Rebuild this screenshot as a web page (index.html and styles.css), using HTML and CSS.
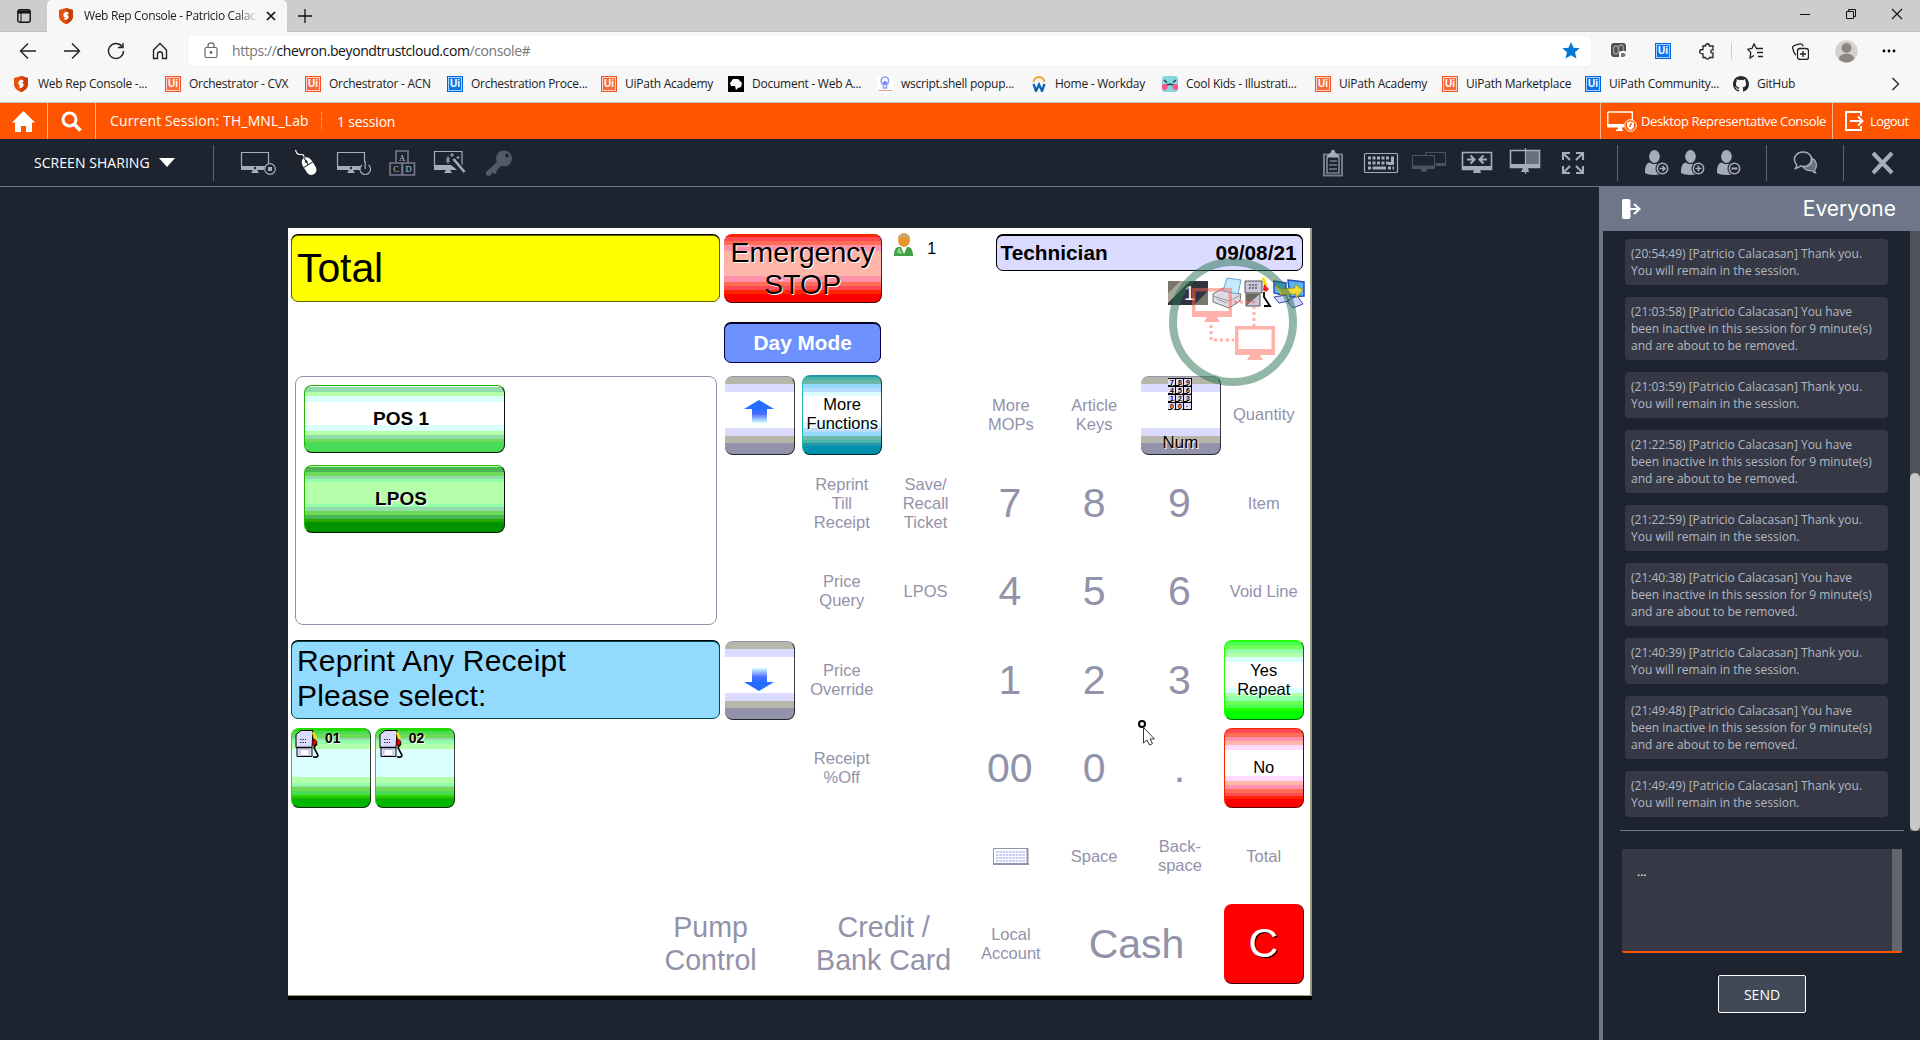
FILE: index.html
```html
<!DOCTYPE html>
<html lang="en">
<head>
<meta charset="utf-8">
<title>Web Rep Console - Patricio Calacasan</title>
<link rel="stylesheet" href="styles.css">
</head>
<body>
<svg class="defs" width="0" height="0" aria-hidden="true">
  <defs>
    <symbol id="shield" viewBox="0 0 14 16"><path d="M7 0l7 2v6c0 4-3 6.500-7 8-4-1.500-7-4-7-8V2z" fill="#e8500c"/><path d="M7 0l7 2v6c0 4-3 6.500-7 8z" fill="#c93f06"/><path d="M5 9c-1.500-3 0-5 3-5.500l2 2-2 1 1 1c2 2-1 5-3 4.500l-1-2 2-.5z" fill="#fff"/></symbol>
    <symbol id="pump" viewBox="0 0 25 28"><path d="M1 5l5-4h12l-1 17v9H2V18H1z" fill="#dbdbff" stroke="#000"/><path d="M1 18h16" stroke="#000" stroke-width="1.500"/><path d="M5 20h9v6H5z" fill="#fff" stroke="#b6b6db"/><path d="M5 10h6M5 13h6" stroke="#333" stroke-dasharray="1.500 1"/><path d="M18 3l3 6" stroke="#ffdb00" stroke-width="2.500"/><path d="M18 9l4 3-1 4h-3z" fill="#f00" stroke="#600"/><path d="M22 14l-3 4 4 8c0 2-4 2-5 1" fill="none" stroke="#000" stroke-width="1.600"/></symbol>
    <symbol id="person" viewBox="0 0 24 26"><ellipse cx="9.500" cy="6.500" rx="5.300" ry="6.500"/><path d="M0 23c0-8 2-10 5-10.500 2 2 7 2 9 0 2 .5 3 1.200 4 2.500v9c-5 1.300-15 1.300-18-1z"/><circle cx="17.500" cy="18.500" r="7" fill="#1e2330"/><circle cx="17.500" cy="18.500" r="5.200" fill="none" stroke="#a6acba" stroke-width="1.500"/></symbol>
  </defs>
</svg>

<header class="browser">
  <div class="tabstrip">
    <svg class="tabmenu" width="14" height="14" viewBox="0 0 14 14"><rect x=".8" y=".8" width="12.400" height="12.400" rx="2" fill="none" stroke="#111" stroke-width="1.400"/><path d="M1 3h12" stroke="#111" stroke-width="3"/><path d="M4 3v10" stroke="#111"/></svg>
    <div class="tab"><svg width="14" height="16"><use href="#shield"/></svg><span class="tabtitle">Web Rep Console - Patricio Calac</span><svg width="10" height="10" viewBox="0 0 10 10"><path d="M1 1l8 8M9 1l-8 8" stroke="#111" stroke-width="1.700"/></svg></div>
    <svg class="newtab" width="14" height="14" viewBox="0 0 14 14"><path d="M7 0v14M0 7h14" stroke="#111" stroke-width="1.300"/></svg>
    <div class="winctl">
      <svg width="12" height="12" viewBox="0 0 12 12"><path d="M1 6.500h10" stroke="#111"/></svg>
      <svg width="12" height="12" viewBox="0 0 12 12" fill="none" stroke="#111"><path d="M1.500 3.500h7v7h-7zM3.500 3V1.500h7v7H9"/></svg>
      <svg width="12" height="12" viewBox="0 0 12 12"><path d="M1 1l10 10M11 1L1 11" stroke="#111" stroke-width="1.100"/></svg>
    </div>
  </div>
  <div class="navbar">
    <div class="navbtns">
      <svg width="18" height="18" viewBox="0 0 18 18"><path d="M17 9H1.500M9 1.500L1.500 9 9 16.500"/></svg>
      <svg width="18" height="18" viewBox="0 0 18 18"><path d="M1 9h15.500M9 1.500L16.500 9 9 16.500"/></svg>
      <svg width="18" height="18" viewBox="0 0 18 18"><path d="M15 4.500A7.500 7.500 0 1 0 16.500 9M16 1v4.500h-5"/></svg>
      <svg width="18" height="18" viewBox="0 0 18 18"><path d="M2.500 8L9 1.500 15.500 8v8.500h-4V12c0-3-5-3-5 0v4.500h-4z"/></svg>
    </div>
    <div class="address">
      <svg width="14" height="17" viewBox="0 0 14 17" fill="none" stroke="#666" stroke-width="1.200"><rect x="1" y="5.500" width="12" height="10" rx="1.500"/><path d="M4 5.500V3.500c0-3.500 6-3.500 6 0v2"/><circle cx="7" cy="10.500" r=".8" fill="#666"/></svg>
      <span class="url">https://<b>chevron.beyondtrustcloud.com</b>/console#</span>
      <svg class="star" width="18" height="17" viewBox="0 0 18 17"><path d="M9 0l2.500 5.700 6.200.6-4.700 4 1.500 6.200L9 13.300 3.500 16.500 5 10.300l-4.700-4 6.200-.6z" fill="#0078d4"/></svg>
    </div>
    <div class="exts">
      <svg width="16" height="16" viewBox="0 0 16 16"><rect width="15" height="14" rx="3" fill="#505050"/><ellipse cx="5" cy="7" rx="2.500" ry="4" fill="none" stroke="#999" stroke-width="1.400"/><ellipse cx="10" cy="6" rx="2.500" ry="4" fill="none" stroke="#999" stroke-width="1.400"/><rect x="8" y="8" width="8" height="8" rx="3" fill="#fff"/><path d="M10 10h3l2 2-2 2h-3z" fill="#777"/></svg>
      <span class="ui blue">Ui</span>
      <svg width="16" height="17" viewBox="0 0 16 17" class="line"><path d="M4 3h2.500c0-3 4-3 4 0H14v4c-3-.5-3 3.500 0 3v4.500h-3.500c0 2-4 2-4 0H4v-3.500c-4.500 0-4.500-4.500 0-4.500z"/></svg>
      <i class="vsep"></i>
      <svg width="17" height="16" viewBox="0 0 17 16" class="line"><path d="M11 5.500H9.500L7 1 5 5.500l-4.200.7 3 3.500L3 15l4-2.500M9.500 5.500H16M10 9.500h6M11 13.500h5"/></svg>
      <svg width="17" height="17" viewBox="0 0 17 17" class="line"><rect x="5.500" y="5.500" width="11" height="11" rx="2.500"/><path d="M11 8v6M8 11h6M4 12C2 11.500.6 5 .6 4 .6 2.500 7 .6 9 .8c1.500.2 2 1.200 2.200 2.500"/></svg>
      <svg width="23" height="23" viewBox="0 0 23 23"><circle cx="11.500" cy="11.500" r="11.200" fill="#d4d1ce"/><circle cx="11.500" cy="8" r="5" fill="#8b8784"/><path d="M4 19c0-7 15-7 15 0-3.500 4.500-11.500 4.500-15 0z" fill="#8b8784"/></svg>
      <svg width="14" height="4" viewBox="0 0 14 4"><circle cx="2" cy="2" r="1.400"/><circle cx="7" cy="2" r="1.400"/><circle cx="12" cy="2" r="1.400"/></svg>
    </div>
  </div>
  <nav class="bookmarks">
    <a><svg width="16" height="16"><use href="#shield"/></svg>Web Rep Console -...</a>
    <a><span class="ui">Ui</span>Orchestrator - CVX</a>
    <a><span class="ui">Ui</span>Orchestrator - ACN</a>
    <a><span class="ui blue">Ui</span>Orchestration Proce...</a>
    <a><span class="ui">Ui</span>UiPath Academy</a>
    <a><svg width="16" height="16" viewBox="0 0 16 16"><path d="M0 0h16v16H0z"/><path d="M2 7l3-4 5 0 4 4-1 4-3 1-2 2-1-4-4 0z" fill="#fff"/></svg>Document - Web A...</a>
    <a><svg width="16" height="16" viewBox="0 0 16 16"><path d="M0 0h16v16H0z" fill="#fff"/><path d="M6.500 9C2.500 6 4 1 8 1s5 5 1.500 8v3h-3z" fill="none" stroke="#8aa0ff" stroke-width="1.500"/><circle cx="8" cy="7" r="2" fill="#7086ee"/><path d="M1 14.500h14" stroke="#f49a9a"/></svg>wscript.shell popup...</a>
    <a><svg width="16" height="16" viewBox="0 0 16 16"><path d="M2.500 6c1-6.500 10-6.500 11 0" fill="none" stroke="#f59b20" stroke-width="1.800"/><path d="M2.500 8l2.500 7 3-6.500 3 6.500 2.500-7" fill="none" stroke="#0c62b8" stroke-width="2.300"/></svg>Home - Workday</a>
    <a><svg width="16" height="16" viewBox="0 0 16 16"><rect width="16" height="16" rx="3" fill="#84d7df"/><circle cx="2.500" cy="11" r="3" fill="#ff5588"/><circle cx="13.500" cy="11" r="3" fill="#ff5588"/><path d="M2 4l3 2.500M14 4l-3 2.500M5 8c1 2 2 0 3 0s2 2 3 0" fill="none" stroke="#333" stroke-width="1.400"/></svg>Cool Kids - Illustrati...</a>
    <a><span class="ui">Ui</span>UiPath Academy</a>
    <a><span class="ui">Ui</span>UiPath Marketplace</a>
    <a><span class="ui blue">Ui</span>UiPath Community...</a>
    <a><svg width="16" height="16" viewBox="0 0 16 16"><path fill="#24292f" d="M8 0C3.580 0 0 3.580 0 8c0 3.540 2.290 6.530 5.470 7.590.4.070.55-.17.55-.38v-1.490c-2.010.37-2.530-.49-2.690-.94-.09-.23-.48-.94-.82-1.130-.28-.15-.68-.52-.01-.53.630-.01 1.080.58 1.230.82.720 1.210 1.870.87 2.330.66.070-.52.280-.87.510-1.070-1.780-.2-3.640-.89-3.640-3.950 0-.87.310-1.590.820-2.150-.08-.2-.36-1.020.08-2.120 0 0 .67-.21 2.200.82a7.400 7.400 0 0 1 4 0c1.530-1.040 2.200-.82 2.200-.82.440 1.100.160 1.920.080 2.120.510.560.820 1.270.820 2.150 0 3.070-1.870 3.750-3.650 3.950.290.250.540.730.540 1.480v2.200c0 .21.150.46.550.38A8 8 0 0 0 16 8c0-4.420-3.580-8-8-8z"/></svg>GitHub</a>
    <svg class="more" width="9" height="14" viewBox="0 0 9 14"><path d="M1.500 1L7.500 7l-6 6" fill="none" stroke="#222" stroke-width="1.300"/></svg>
  </nav>
</header>

<div class="sessionbar">
  <div class="sq"><svg width="23" height="21" viewBox="0 0 23 21"><path d="M11.500 0L23 11.500h-3V21h-6v-6H9v6H3v-9.500H0z" fill="#fff"/></svg></div>
  <div class="sq"><svg width="21" height="21" viewBox="0 0 21 21"><circle cx="8.500" cy="8.500" r="6.500" fill="none" stroke="#fff" stroke-width="3"/><path d="M13 13l6.500 6.500" stroke="#fff" stroke-width="3.500"/></svg></div>
  <span class="cur">Current Session: TH_MNL_Lab</span>
  <span class="count">1 session</span>
  <div class="drc"><svg width="30" height="23" viewBox="0 0 30 23"><path d="M.8 2h24.500v10" fill="none" stroke="#fff" stroke-width="1.300"/><path d="M.8 2v14" stroke="#fff" stroke-width="1.300"/><path d="M.2 14h17l-.5 3.500H.2zM9 19.500h7V21H9zM11 17.500h4v2h-4z" fill="#fff"/><circle cx="23.500" cy="15.500" r="5.800" fill="#ff5500" stroke="#fff"/><path d="M20 12.500l3.500-1 3.500 1v3c0 2-1.500 4-3.500 4.500-2-.5-3.500-2.500-3.500-4.500z" fill="#fff"/><path d="M22.500 17l2-4" stroke="#ff5500" stroke-width="1.500"/></svg><span>Desktop Representative Console</span></div>
  <div class="logout"><svg width="20" height="20" viewBox="0 0 20 20" fill="none" stroke="#fff" stroke-width="1.900"><path d="M16 5V1H1v18h15v-4M5 10h13M13 5.500l4.500 4.500-4.500 4.500"/></svg><span>Logout</span></div>
</div>

<div class="tools">
  <div class="mode">SCREEN SHARING<i></i></div>
  <div class="icons">
    <svg viewBox="0 0 48 37"><path d="M7.500 22V8.500h27V20" class="ln"/><path d="M7 22h24l-1 4H7zM19 26h4l2 3h-8z"/><circle cx="21" cy="24" r="1.200" fill="#1e2330"/><circle cx="36" cy="25" r="5.300" class="ln"/><path d="M34 23h4v4h-4z"/></svg>
    <svg viewBox="0 0 48 37"><g transform="translate(0 1) rotate(-32 27 21)" fill="#fff"><path d="M21.800 18.500c0-4.500 2.200-7 5.200-7s5.200 2.500 5.200 7v6c0 4-2.200 6-5.200 6s-5.200-2-5.200-6z"/><path d="M21.500 19.500h11M27 12v7.500" stroke="#1e2330"/><path d="M27 14.500v2.500" stroke="#1e2330" stroke-width="2.200"/></g><path d="M22 13.500c0-3.500-1.500-3-4.500-3s-3-2-4-4.500" class="ln white"/></svg>
    <svg viewBox="0 0 48 37"><path d="M7.500 22V8.500h27V18" class="ln"/><path d="M7 22h23v4H7zM19 26h4l2 3h-8z"/><circle cx="21" cy="24" r="1.200" fill="#1e2330"/><path d="M32 21a5.300 5.300 0 1 0 6.500 0M35.200 17v8" class="ln"/></svg>
    <svg viewBox="0 0 48 37" class="mid"><path d="M18 7h12v12H18zM12 19h12v12H12zM24.500 19h12v12h-12z" class="ln2"/><text x="24" y="16.500">A</text><text x="18" y="28">C</text><text x="30.500" y="28">D</text></svg>
    <svg viewBox="0 0 48 37"><path d="M8.500 22V7.500h27.500V24" class="ln"/><path d="M8 21h17l6 5H8zM20 26h4l2 3h-8z"/><path d="M27 14l12 14" stroke="#1e2330" stroke-width="5"/><path d="M27.500 15L38.500 28" stroke="#a6acba" stroke-width="2.600"/><path d="M20 14l4 4M24 14l-4 4M22 12v8M26 9v4M24 11h4M32 12v3M30.500 13.500h3" stroke="#a6acba"/></svg>
    <svg viewBox="0 0 48 37"><g fill="#545966"><circle cx="30" cy="14.500" r="8"/><path d="M24 17l4 4-5 5-1 4-4-1-2 3-4-1v-3z"/></g><circle cx="33" cy="11.500" r="2" fill="#1e2330"/></svg>
  </div>
  <div class="icons right">
    <svg viewBox="0 0 48 37"><path d="M15 10.500h18v21H15z" fill="none" stroke="#757b8a" stroke-width="2"/><path d="M18 13h12v16H18z" class="ln"/><path d="M18 13c0-3 3-3 4-5 0-3 4-3 4 0 1 2 4 2 4 5z"/><path d="M21 17h7M20 21h8M20 25h8" class="ln"/></svg>
    <svg viewBox="0 0 48 37"><rect x="7.500" y="9.500" width="33" height="19" rx="1" class="ln"/><path d="M11 14h22M11 19h22M11 24h5M31 24h6" stroke="#a6acba" stroke-width="3" stroke-dasharray="3 1.500"/><path d="M16 24h13M35.500 12.500v8M31 19.500h6" stroke="#a6acba" stroke-width="3"/></svg>
    <svg viewBox="0 0 48 37" fill="#4d5260" stroke="#4d5260"><path d="M20.500 11V8.500h20v13H31" fill="none"/><path d="M31 19.500h9v2h-9z"/><path d="M7.500 11.500h22v13h-22z" fill="none"/><path d="M8 22h21v2H8zM17 25h4l1 2h-6z"/></svg>
    <svg viewBox="0 0 48 37"><path d="M9.500 8.500h29v17h-29z" class="ln heavy"/><path d="M9 22h30v4H9zM21 26h6l1 3h-8z"/><path d="M14 15.500h7M17.500 11.500l4 4-4 4M34 15.500h-7M30.500 11.500l-4 4 4 4" class="ln bold"/></svg>
    <svg viewBox="0 0 48 37"><path d="M24 7h14.500v14H24z" fill="#6b7080"/><path d="M9.500 6.500h29v17h-29z" class="ln heavy"/><path d="M9 20h30v4H9zM22 24h5l1 4h-8z"/><path d="M24.500 4v26" class="ln"/></svg>
    <svg viewBox="0 0 48 37"><path d="M14 16V9h7M14 9l7 7M27 9h7v7M34 9l-7 7M14 22v7h7M14 29l7-7M34 22v7h-7M34 29l-7-7" class="ln bold"/></svg>
  </div>
  <div class="people">
    <svg viewBox="0 0 24 26"><use href="#person"/><path d="M14.500 18.500h5M17.500 16l2.500 2.500-2.500 2.500" class="ln heavy"/></svg>
    <svg viewBox="0 0 24 26"><use href="#person"/><path d="M14.500 18.500h6M17.500 15.500v6" class="ln heavy"/></svg>
    <svg viewBox="0 0 24 26"><use href="#person"/><path d="M14.500 18.500h6" class="ln bold"/></svg>
  </div>
  <div class="chat"><svg width="24" height="23" viewBox="0 0 24 23"><path d="M10 16c2 3 6 4 9 3.500 1 1.500 2 2 3.500 2.500-1-1.500-.5-2.500-.5-4 3-3 1-9-3-11 1 5-2 9-9 9z" fill="#6b7080" stroke="#a6acba" stroke-width="1.200"/><path d="M3.500 13.500c-5-6 0-12.500 6.500-12.500s9.500 5 8 9.500c-1.500 4-6 5.500-10.500 4.500-1 1-3 2-5 2.500 1-1.500 1.500-2.500 1-4z" fill="#1e2330" stroke="#a6acba" stroke-width="1.500"/></svg></div>
  <div class="close"><svg width="23" height="24" viewBox="0 0 23 24"><path d="M2 2l19 20M21 2L2 22" stroke="#a6acba" stroke-width="4"/></svg></div>
</div>

<main class="work">
  <section class="stage">
    <div class="pos">
      <div class="field total">Total</div>
      <div class="btn stop">Emergency<br>STOP</div>
      <div class="user"><svg width="19" height="24" viewBox="0 0 19 24"><ellipse cx="10" cy="7" rx="6" ry="7" fill="#e8962e"/><path d="M4 5c0-6 12-6 12 0-4-1-8-1-12 0z" fill="#c9a878"/><path d="M0 23c0-7 2-9 5-9h9c3 0 5 3 5 9z" fill="#3fa045"/><path d="M3 20c0-3 1-5 3-5l2 6z" fill="#7fd67a"/><path d="M7 14l3 7 3-7z" fill="#fff"/></svg>1</div>
      <div class="field tech"><span>Technician</span><span>09/08/21</span></div>
      <div class="field day">Day Mode</div>
      <div class="panel"><div class="btn pos1">POS 1</div><div class="btn lpos">LPOS</div></div>
      <div class="btn gray up"><svg width="30" height="24" viewBox="0 0 30 24"><defs><linearGradient id="ga" x1="0" y1="0" x2="0" y2="1"><stop stop-color="#2470ff"/><stop offset=".35" stop-color="#496dff"/><stop offset="1" stop-color="#dbffff"/></linearGradient></defs><path d="M8 9h15v14H8z" fill="url(#ga)"/><path d="M15 0l15 9H0z" fill="#246dff"/></svg></div>
      <div class="btn teal more-fn">More<br>Functions</div>
      <div class="key k9 r1">More<br>MOPs</div><div class="key k10 r1">Article<br>Keys</div>
      <div class="btn gray num"><svg width="24" height="32" viewBox="0 0 24 32"><path d="M0 0h24v32H0z" fill="#000"/><path d="M0 1h7v6H0zM8 1h7v6H8zM16 1h7v6h-7zM0 9h7v6H0zM8 9h7v6H8zM16 9h7v6h-7zM0 17h7v6H0zM8 17h7v6H8zM16 17h7v6h-7zM0 25h7v6H0zM8 25h7v6H8zM16 25h7v6h-7z" fill="#dbdbff"/><g font-family="Liberation Sans" font-size="7" font-weight="bold"><text x="2" y="6.500">7</text><text x="10" y="6.500">8</text><text x="18" y="6.500">9</text><text x="2" y="14.500">4</text><text x="10" y="14.500">5</text><text x="18" y="14.500">6</text><text x="2" y="22.500">1</text><text x="10" y="22.500">2</text><text x="18" y="22.500">3</text><text x="2" y="30.500">0</text><text x="10" y="30.500">0</text><text x="18" y="29">.</text></g></svg><span>Num</span></div>
      <div class="key k12 r1">Quantity</div>
      <div class="key k7 r2">Reprint<br>Till<br>Receipt</div><div class="key k8 r2">Save/<br>Recall<br>Ticket</div><div class="key big k9 r2">7</div><div class="key big k10 r2">8</div><div class="key big k11 r2">9</div><div class="key k12 r2">Item</div>
      <div class="key k7 r3">Price<br>Query</div><div class="key k8 r3">LPOS</div><div class="key big k9 r3">4</div><div class="key big k10 r3">5</div><div class="key big k11 r3">6</div><div class="key k12 r3">Void Line</div>
      <div class="field reprint">Reprint Any Receipt<br>Please select:</div>
      <div class="btn gray down"><svg width="30" height="24" viewBox="0 0 30 24"><g transform="matrix(1 0 0 -1 0 24)"><path d="M8 9h15v14H8z" fill="url(#ga)"/><path d="M15 0l15 9H0z" fill="#246dff"/></g></svg></div>
      <div class="key k7 r4">Price<br>Override</div><div class="key big k9 r4">1</div><div class="key big k10 r4">2</div><div class="key big k11 r4">3</div><div class="btn yes">Yes<br>Repeat</div>
      <div class="btn pump p1"><svg width="25" height="29"><use href="#pump"/></svg>01</div><div class="btn pump p2"><svg width="25" height="29"><use href="#pump"/></svg>02</div>
      <div class="key k7 r5">Receipt<br>%Off</div><div class="key big k9 r5">00</div><div class="key big k10 r5">0</div><div class="key big k11 r5">.</div><div class="btn no">No</div>
      <div class="key k9 r6"><svg width="36" height="17" viewBox="0 0 36 17"><path d="M.5.500h34v15H.5z" fill="#fff" stroke="#9292aa"/><path d="M34.500 0v17M0 16h36" stroke="#9292aa" stroke-width="2"/><path d="M3 4h29M3 7h29M3 10h29M3 13h29" stroke="#c8c8f5" stroke-width="2" stroke-dasharray="2.500 .8"/></svg></div><div class="key k10 r6">Space</div><div class="key k11 r6">Back-<br>space</div><div class="key k12 r6">Total</div>
      <div class="key mid-text pumpctl r7">Pump<br>Control</div><div class="key mid-text credit r7">Credit /<br>Bank Card</div><div class="key k9 r7">Local<br>Account</div><div class="key big cash r7">Cash</div><div class="btn clear">C</div>

      <svg class="status" width="140" height="32" viewBox="0 0 140 32">
        <path d="M1 4h40v24H1z" fill="#333340"/><path d="M1 4h12L1 16zM41 14v14H27z" fill="#79786a"/><path d="M13 4h10L1 26V16z" fill="#a7a698"/><text x="17" y="23" font-family="Liberation Sans" font-size="20" fill="#fff">1</text>
        <path d="M46 17l10-6 18 6-1 7-11 7-16-6z" fill="#dcdbe6" stroke="#777"/><path d="M56 14l4-13 14 2-3 14z" fill="#c3eaff" stroke="#6fa4cf"/><path d="M46 19l16 5 12-6M50 22l10 4" fill="none" stroke="#999"/>
        <path d="M78 4h17v12H78zM79 17h14v12H79z" fill="#c8c8dc" stroke="#555"/><path d="M79 29l14-12H79z" fill="#6b6b62"/><path d="M82 8h8M82 11h8" stroke="#222" stroke-dasharray="2 1"/><path d="M96 1l3 8" stroke="#ffdb00" stroke-width="3"/><path d="M97 7l5 5-3 3-3-2z" fill="#e22"/><path d="M97 15v5l6 9h-6" fill="none" stroke="#000" stroke-width="1.800"/>
        <path d="M107 4l12 2v13l-12-3zM121 3l16 2v14l-14 1z" fill="#58b4f5" stroke="#2850b5" stroke-width="1.500"/><path d="M107 20l12-2 3 6-10 2zM120 24l10-5 6 8-10 4z" fill="#cfd6ff" stroke="#4146a0"/><path d="M108 8l7 4 13-1v-4l8 6-7 8v-4l-15 1z" fill="#eed83a" stroke="#9b8a12" stroke-width=".7"/>
      </svg>
      <svg class="badge" width="128" height="128" viewBox="0 0 128 128"><circle cx="64" cy="64" r="60" fill="none" stroke="#25704f" stroke-opacity=".5" stroke-width="8"/><g fill="#ff6655" fill-opacity=".5" fill-rule="evenodd"><path d="M23 30h40v29H23zM26.500 33.500v19.500h33v-19.500zM38 59h10l3 5H35z"/><path d="M66 68h40v29H66zM69.500 71.500v19.500h33v-19.500zM81 97h10l3 5H78z"/></g><path d="M42 67v15h23M65 44h20v24" fill="none" stroke="#ff6655" stroke-opacity=".5" stroke-width="3" stroke-dasharray="3 3"/></svg>
      <svg class="cursor" width="20" height="27" viewBox="0 0 20 27"><circle cx="4" cy="4" r="3" fill="#fff" stroke="#000" stroke-width="2"/><path d="M5.500 7.500v15.500l3.500-3 2.500 5 3-1.500-2.500-4.500h4.500z" fill="#fff" stroke="#333"/></svg>
    </div>
  </section>

  <aside class="side">
    <div class="sidehead"><svg width="19" height="20" viewBox="0 0 19 20"><rect width="8.500" height="20" rx="2" fill="#fff"/><path d="M8 10h9M12 5l5.500 5-5.500 5" fill="none" stroke="#fff" stroke-width="2"/></svg><span>Everyone</span></div>
    <div class="chatarea">
      <div class="msgs">
        <p>(20:54:49) [Patricio Calacasan] Thank you.<br>You will remain in the session.</p>
        <p>(21:03:58) [Patricio Calacasan] You have<br>been inactive in this session for 9 minute(s)<br>and are about to be removed.</p>
        <p>(21:03:59) [Patricio Calacasan] Thank you.<br>You will remain in the session.</p>
        <p>(21:22:58) [Patricio Calacasan] You have<br>been inactive in this session for 9 minute(s)<br>and are about to be removed.</p>
        <p>(21:22:59) [Patricio Calacasan] Thank you.<br>You will remain in the session.</p>
        <p>(21:40:38) [Patricio Calacasan] You have<br>been inactive in this session for 9 minute(s)<br>and are about to be removed.</p>
        <p>(21:40:39) [Patricio Calacasan] Thank you.<br>You will remain in the session.</p>
        <p>(21:49:48) [Patricio Calacasan] You have<br>been inactive in this session for 9 minute(s)<br>and are about to be removed.</p>
        <p>(21:49:49) [Patricio Calacasan] Thank you.<br>You will remain in the session.</p>
      </div>
      <div class="track"><div class="thumb"></div></div>
    </div>
    <div class="compose"><div class="input"><span>...</span><i></i></div><div class="send">SEND</div></div>
  </aside>
</main>
</body>
</html>
```
FILE: styles.css
```css
* { box-sizing: border-box; }
html { height: 1040px; overflow: hidden; }
body { margin: 0; width: 1920px; height: 1040px; overflow: hidden; background: #1e2330; font-family: "Open Sans", "Noto Sans", sans-serif; display: flex; flex-direction: column; }
svg { display: block; flex: none; }
.defs { position: absolute; }

/* browser chrome */
.browser { background: #f7f7f7; height: 103px; border-bottom: 1px solid #c4c4c4; font-size: 12px; color: #1b1b1b; flex: none; }
.tabstrip { height: 32px; background: #cdcdcd; display: flex; align-items: center; border-bottom: 1px solid #bdbdbd; }
.tabmenu { margin-left: 17px; }
.tab { margin-left: 16px; width: 240px; height: 32px; background: #f7f7f7; border-radius: 5px 5px 0 0; display: flex; align-items: center; padding: 0 11px 0 12px; }
.tabtitle { width: 175px; margin: 0 8px 0 11px; white-space: nowrap; letter-spacing: -.35px; -webkit-mask-image: linear-gradient(90deg, #000 88%, transparent); mask-image: linear-gradient(90deg, #000 88%, transparent); }
.newtab { margin-left: 11px; }
.winctl { margin-left: auto; margin-right: 17px; display: flex; gap: 34px; padding-bottom: 3px; }
.navbar { height: 38px; display: flex; align-items: center; }
.navbtns { display: flex; gap: 26px; margin-left: 19px; fill: none; stroke: #222; stroke-width: 1.4; }
.address { margin-left: 19px; width: 1403px; height: 30px; background: #fff; border-radius: 4px; display: flex; align-items: center; padding: 0 11px 1px 16px; box-shadow: 0 0 2px #e2e2e2; }
.url { font-size: 14px; color: #767676; margin-left: 14px; letter-spacing: -.4px; }
.url b { font-weight: 400; color: #111; }
.star { margin-left: auto; }
.exts { width: 310px; display: grid; grid-template-columns: 44px 44px 44px 4px 45px 45px 47px 37px; justify-items: center; align-items: center; margin-left: 6px; }
.line { fill: none; stroke: #222; stroke-width: 1.3; }
.vsep { width: 1px; height: 16px; background: #ccc; }
.ui { width: 16px; height: 16px; flex: none; border: 1.5px solid #f4511e; background: #f96a3c; box-shadow: inset 0 0 0 1px #ffd5c5; color: #fff; font: bold 10px/13px "Liberation Sans", sans-serif; text-align: center; letter-spacing: 0; }
.ui.blue { border-color: #0067df; background: #0b76ea; box-shadow: inset 0 0 0 1px #a5d0ff; }
.bookmarks { height: 28px; display: grid; grid-template-columns: 152px 140px 142px 154px 127px 149px 154px 131px 153px 127px 143px 148px 146px auto; align-items: center; padding: 0 0 1px 13px; letter-spacing: -.25px; white-space: nowrap; }
.bookmarks a { display: flex; align-items: center; gap: 8px; }
.bookmarks a:first-child { gap: 9px; }
.more { margin-left: 12px; }

/* session bar */
.sessionbar { height: 36px; flex: none; background: #ff5500; color: #fff; display: flex; align-items: center; font-size: 14px; }
.sq { width: 48px; height: 36px; border-right: 1px solid #ffb68f; display: flex; align-items: center; justify-content: center; }
.cur { margin-left: 14px; width: 212px; border-right: 1px dotted #ffb68f; line-height: 18px; white-space: nowrap; letter-spacing: .14px; }
.count { margin-left: 15px; letter-spacing: -.2px; }
.drc { margin-left: auto; width: 233px; height: 36px; border-left: 1px solid #ffb68f; border-right: 1px solid #ffb68f; display: flex; align-items: center; padding-left: 6px; gap: 4px; font-size: 13px; white-space: nowrap; letter-spacing: -.38px; }
.logout { width: 87px; display: flex; align-items: center; padding-left: 12px; gap: 5px; font-size: 13px; letter-spacing: -.6px; }

/* session tools */
.tools { height: 48px; flex: none; border-bottom: 1px solid #6e778a; display: flex; align-items: center; color: #fff; fill: #a6acba; }
.mode { width: 214px; height: 36px; border-right: 1px solid #5b6272; padding-left: 34px; display: flex; align-items: center; font-size: 14px; letter-spacing: .05px; white-space: nowrap; }
.mode i { border: 8px solid transparent; border-top: 9px solid #fff; border-bottom: 0; margin-left: 9px; }
.icons { display: flex; margin-left: 20px; }
.icons svg { width: 48px; height: 37px; }
.icons.right { margin-left: 787px; }
.ln { fill: none; stroke: #a6acba; stroke-width: 1.2; }
.ln.white { stroke: #fff; }
.ln.heavy { stroke-width: 1.6; }
.ln.bold { stroke-width: 2.1; }
.ln2 { fill: none; stroke: #757b8a; stroke-width: 1.6; }
.mid text { font: 8.5px "Liberation Serif", serif; text-anchor: middle; fill: #c4c8d2; }
.people { margin-left: 20px; height: 36px; border-left: 1px solid #5b6272; border-right: 1px solid #5b6272; width: 150px; display: flex; align-items: center; gap: 12px; padding-left: 27px; }
.people svg { width: 24px; height: 26px; }
.chat { width: 77px; height: 36px; border-right: 1px solid #5b6272; display: flex; align-items: center; justify-content: center; }
.close { margin-left: 27px; }

/* remote screen */
.work { flex: 1; display: flex; min-height: 0; }
.stage { width: 1599px; padding: 41px 0 0 288px; }
.pos { width: 1024px; height: 772px; background: #fff; border-bottom: 4px solid #000; box-shadow: inset -2px -1px 0 #9a9a80; position: relative; padding: 0 0 0 .6px; display: grid; grid-template-columns: repeat(12, 84.8px); grid-template-rows: 78px 64.8px repeat(7, 88.25px); font-family: "Liberation Sans", sans-serif; color: #000; }
.field { border: 1px solid #000; border-radius: 7px; box-shadow: 0 -1px 0 #000; display: flex; align-items: center; }
.btn { display: flex; align-items: center; justify-content: center; text-align: center; border-radius: 8px; font-size: 16.5px; line-height: 19px; width: 80px; height: 80px; align-self: center; text-shadow: 1px 1px 0 #fff; border-right: 1px solid rgba(0,0,0,.75); border-bottom: 1px solid rgba(0,0,0,.75); background-origin: border-box; }
.total { grid-area: 1 / 1 / 2 / 6; width: 429px; height: 67px; margin: 7px 0 0 2.4px; background: #ff0; padding-left: 5px; font-size: 41px; border-color: #606000; letter-spacing: -.1px; }
.stop { grid-area: 1 / 6 / 2 / 8; justify-self: end; align-self: start; margin-top: 6px; width: 158px; height: 69px; font-size: 28.5px; line-height: 32px; background-image: linear-gradient(#ff2400 3px, #ff4955 3px 7px, #ff6d55 7px 11px, #ff92aa 11px 17px, #ffb6aa 17px 42px, #ff92aa 42px 48px, #ff6d55 48px 52px, #ff4955 52px 56px, #ff2400 56px 60px, #f00 60px); }
.user { grid-area: 1 / 8 / 2 / 9; margin: 5px 0 0 12px; display: flex; gap: 14px; font-size: 16px; line-height: 32px; }
.tech { grid-area: 1 / 9 / 2 / 13; justify-self: end; width: 307px; height: 36px; margin: 7px 3.6px 0 0; background: #dbdbff; padding: 0 5px 0 4px; justify-content: space-between; font-size: 20.8px; font-weight: 700; }
.day { grid-area: 2 / 6 / 3 / 8; justify-self: end; width: 157px; height: 40px; margin: 17px 1px 0 0; background: #6d92ff; border-color: #000049; color: #fff; font-size: 20.8px; font-weight: 700; justify-content: center; }
.panel { grid-area: 3 / 1 / 6 / 6; width: 422px; height: 249px; margin: 5px 0 0 6.4px; border: 1px solid #9292aa; border-radius: 8px; padding: 8px; display: flex; flex-direction: column; gap: 12px; }
.panel .btn { width: 201px; height: 68px; align-self: flex-start; font-size: 19px; font-weight: 700; border: 1px solid #24b600; border-right-color: #001800; border-bottom-color: #001800; padding-right: 7px; }
.pos1 { background-image: linear-gradient(#fff 2px, #92dbaa 2px 7px, #b4ffa8 7px 11px, #dbffff 11px 17px, #fff 17px 40px, #dbffff 40px 46px, #b4ffa8 46px 50px, #92dbaa 50px 54px, #6ddb57 54px 57px, #48db57 57px); }
.lpos { background-image: linear-gradient(#b6ffaa 2px, #49b655 2px 7px, #6ddb57 7px 11px, #92dbaa 11px 14px, #92ffaa 14px 17px, #b6ffaa 17px 39px, #92ffaa 39px 42px, #92dbaa 42px 46px, #6ddb57 46px 50px, #49b655 50px 54px, #24a800 54px 57px, #009200 57px); }
.gray { background-image: linear-gradient(#b6b6aa 8px, #dbdbff 8px 16px, #fff 16px 52px, #dbdbff 52px 60px, #b6b6aa 60px 67px, #9292aa 67px); border-top: 1px solid #9292aa; }
.up, .down { width: 70px; margin-left: 12.4px; margin-top: 1px; height: 79px; padding-right: 1px; }
.up { grid-area: 3 / 6; padding-bottom: 6px; }
.down { grid-area: 6 / 6; padding-bottom: 2px; }
.teal { grid-area: 3 / 7; justify-self: end; border-left: 1px solid #24b6aa; background-image: linear-gradient(#2492aa 2px, #49b6aa 2px 5px, #6db6aa 5px 9px, #92dbff 9px 13px, #b6dbff 13px 17px, #dbffff 17px 21px, #fff 21px 47px, #dbffff 47px 53px, #b6dbff 53px 57px, #92dbff 57px 61px, #6db6aa 61px 65px, #49b6aa 65px 68px, #2492aa 68px 71px, #0092aa 71px); }
.num { grid-area: 3 / 11; justify-self: center; flex-direction: column; justify-content: space-between; padding: 1px 0 2px; height: 79px; margin: 1px 0 0 4px; font-size: 17px; }
.key { color: #9292aa; display: flex; align-items: center; justify-content: center; text-align: center; font-size: 16.5px; line-height: 19px; padding-left: 2px; white-space: nowrap; }
.big { font-size: 41px; line-height: 44px; }
.mid-text { font-size: 28.6px; line-height: 33px; }
.k7 { grid-column: 7; padding-left: 4px; } .k8 { grid-column: 8; } .k9 { grid-column: 9; padding-left: 3px; } .k10 { grid-column: 10; padding-left: 0; } .k11 { grid-column: 11; } .k12 { grid-column: 12; padding-left: 0; }
.big.k9, .big.k11 { padding-left: 1px; }
.r1 { grid-row: 3; } .r2 { grid-row: 4; } .r3 { grid-row: 5; } .r4 { grid-row: 6; } .r5 { grid-row: 7; } .r6 { grid-row: 8; } .r7 { grid-row: 9; }
.reprint { grid-area: 6 / 1 / 7 / 6; width: 429px; height: 78px; margin: 5px 0 0 2.4px; background: #92dbff; padding: 0 0 3px 5px; font-size: 30px; line-height: 35px; border-color: #004955; letter-spacing: .2px; }
.yes, .no, .clear { justify-self: center; }
.yes { grid-area: 6 / 12; border: 1px solid #24ff00; border-right-color: #006d00; border-bottom-color: #006d00; background-image: linear-gradient(#24ff00 2px, #49ff55 2px 5px, #6dff55 5px 9px, #92ffaa 9px 13px, #b6ffaa 13px 17px, #dbffff 17px 22px, #fff 22px 48px, #dbffff 48px 53px, #b6ffaa 53px 56px, #92ffaa 56px 61px, #6dff55 61px 65px, #49ff55 65px 68px, #24ff00 68px 71px, #0f0 71px); }
.no { grid-area: 7 / 12; border: 1px solid #ff2400; border-right-color: #6d0000; border-bottom-color: #6d0000; background-image: linear-gradient(#ff2400 1px, #ff4955 1px 5px, #ff6d55 5px 9px, #ff92aa 9px 13px, #ffb6aa 13px 17px, #ffdbff 17px 22px, #fff 22px 48px, #ffdbff 48px 53px, #ffb6aa 53px 57px, #ff92aa 57px 61px, #ff6d55 61px 65px, #ff4955 65px 68px, #ff2400 68px 71px, #f00 71px); }
.clear { grid-area: 9 / 12; background: #f00; color: #fff; font-size: 41px; text-shadow: 1px 1px 0 #000; }
.pump { grid-row: 7; justify-self: center; align-items: flex-start; justify-content: flex-start; font-size: 14px; font-weight: 700; padding: 1px 0 0 3px; gap: 5px; border-left: 1px solid #24db00; background-image: linear-gradient(#24db00 3px, #49db55 3px 6px, #6ddb55 6px 10px, #92dbaa 10px 12px, #92ffaa 12px 16px, #b6ffaa 16px 21px, #dbffff 21px 49px, #b6ffaa 49px 55px, #92ffaa 55px 58px, #92dbaa 58px 59px, #6ddb55 59px 63px, #49db55 63px 67px, #24db00 67px 69px, #24b600 69px 71px, #00b600 71px); }
.p1 { grid-column: 1; } .p2 { grid-column: 2; margin-right: 2px; }
.pumpctl { grid-column: 5 / 7; padding: 0 4px 0 0; }
.credit { grid-column: 7 / 9; padding-left: 3px; }
.cash { grid-column: 10 / 12; padding-left: 0; }
.status { position: absolute; left: 879px; top: 49px; }
.badge { position: absolute; left: 881px; top: 30px; }
.cursor { position: absolute; left: 850px; top: 492px; }

/* chat side panel */
.side { width: 321px; border-left: 4px solid #6e778a; display: flex; flex-direction: column; margin-top: -1px; }
.sidehead { height: 45px; flex: none; background: #6e778a; display: flex; align-items: center; justify-content: space-between; padding: 0 24px 0 19px; color: #fff; font: 21px "Inter", sans-serif; }
.chatarea { height: 600px; flex: none; display: flex; justify-content: space-between; }
.msgs { width: 284px; margin-left: 17px; border-bottom: 1px solid #6e778a; padding: 8px 16px 0 5px; display: flex; flex-direction: column; gap: 12px; }
.msgs p { margin: 0; padding: 5.5px 6px 6.5px; background: #363945; border-radius: 4px; color: #b4b8c2; font-size: 12px; line-height: 17px; white-space: nowrap; letter-spacing: 0; }
.track { width: 10px; background: #50535d; }
.thumb { margin-top: 242px; height: 358px; background: #c8c8c8; border-radius: 5px; }
.compose { flex: 1; display: flex; flex-direction: column; align-items: center; padding: 18px 0 0; margin-left: -2px; }
.input { width: 280px; height: 104px; background: #363945; border-bottom: 2px solid #ff5500; border-radius: 2px; display: flex; justify-content: space-between; color: #fff; font-size: 12px; padding: 14px 0 0 15px; margin-left: 3px; flex: none; }
.input i { width: 10px; background: #63656e; margin-top: -14px; }
.send { width: 88px; height: 38px; margin: 22px 0 0 3px; border: 1px solid #fff; border-radius: 2px; background: #414957; color: #fff; font-size: 14px; display: flex; align-items: center; justify-content: center; }
```
